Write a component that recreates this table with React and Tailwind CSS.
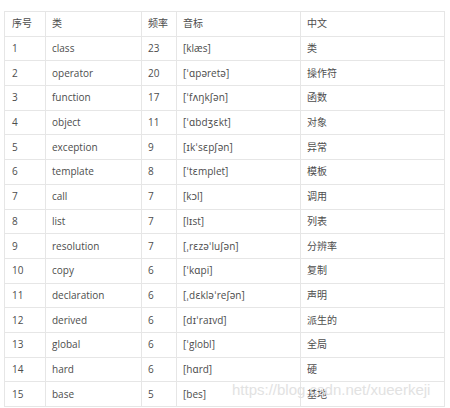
const rows = [
  ["1", "class", "23", "[klæs]", "类"],
  ["2", "operator", "20", "[ˈɑpəretə]", "操作符"],
  ["3", "function", "17", "[ˈfʌŋkʃən]", "函数"],
  ["4", "object", "11", "[ˈɑbdʒɛkt]", "对象"],
  ["5", "exception", "9", "[ɪkˈsɛpʃən]", "异常"],
  ["6", "template", "8", "[ˈtɛmplet]", "模板"],
  ["7", "call", "7", "[kɔl]", "调用"],
  ["8", "list", "7", "[lɪst]", "列表"],
  ["9", "resolution", "7", "[ˌrɛzəˈluʃən]", "分辨率"],
  ["10", "copy", "6", "[ˈkɑpi]", "复制"],
  ["11", "declaration", "6", "[ˌdɛkləˈreʃən]", "声明"],
  ["12", "derived", "6", "[dɪˈraɪvd]", "派生的"],
  ["13", "global", "6", "[ˈglobl]", "全局"],
  ["14", "hard", "6", "[hɑrd]", "硬"],
  ["15", "base", "5", "[bes]", "基地"],
];
const header = ["序号", "类", "频率", "音标", "中文"];

export default function App() {
  const all = [header, ...rows];
  return (
    <div className="relative w-[450px] h-[408px] bg-white overflow-hidden pt-[11px] pl-[4px]">
      <div
        className="grid grid-cols-[41px_96px_35px_124px_144px] auto-rows-[24.6875px] w-[441px] border-l border-t border-[#e6e6e6] text-[10px] text-[#4d4d4d]"
        style={{ fontFamily: '"Open Sans", "Noto Sans CJK SC", "DejaVu Sans", sans-serif' }}
      >
        {all.map((r, i) =>
          r.map((c, j) => (
            <div
              key={i + "-" + j}
              className={
                "flex items-center border-r border-b border-[#e6e6e6] whitespace-nowrap overflow-hidden " +
                (j === 0 ? "pl-[7px]" : "pl-[6px]")
              }
            >
              {c}
            </div>
          ))
        )}
      </div>
      <div
        className="absolute left-[232px] top-[380px] text-[15px] leading-[20px] text-[#e2e2e2] whitespace-nowrap"
        style={{ fontFamily: '"Liberation Sans", Arial, sans-serif' }}
      >
        https://blog.csdn.net/xueerkeji
      </div>
    </div>
  );
}
